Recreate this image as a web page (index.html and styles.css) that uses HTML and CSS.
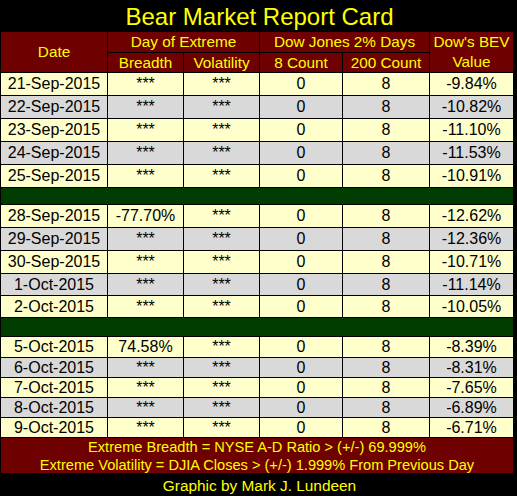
FILE: index.html
```html
<!DOCTYPE html>
<html>
<head>
<meta charset="utf-8">
<link rel="stylesheet" href="styles.css">
</head>
<body>
<div class="page">
  <div class="title">Bear Market Report Card</div>
  <div class="card">
    <div class="h span-r2">Date</div>
    <div class="h span-c2">Day of Extreme</div>
    <div class="h span-c2">Dow Jones 2% Days</div>
    <div class="h span-r2 two">Dow's BEV<br>Value</div>
    <div class="h">Breadth</div>
    <div class="h">Volatility</div>
    <div class="h">8 Count</div>
    <div class="h">200 Count</div>

    <div class="c y">21-Sep-2015</div><div class="c y">***</div><div class="c y">***</div><div class="c y">0</div><div class="c y">8</div><div class="c y">-9.84%</div>
    <div class="c g">22-Sep-2015</div><div class="c g">***</div><div class="c g">***</div><div class="c g">0</div><div class="c g">8</div><div class="c g">-10.82%</div>
    <div class="c y">23-Sep-2015</div><div class="c y">***</div><div class="c y">***</div><div class="c y">0</div><div class="c y">8</div><div class="c y">-11.10%</div>
    <div class="c g">24-Sep-2015</div><div class="c g">***</div><div class="c g">***</div><div class="c g">0</div><div class="c g">8</div><div class="c g">-11.53%</div>
    <div class="c y">25-Sep-2015</div><div class="c y">***</div><div class="c y">***</div><div class="c y">0</div><div class="c y">8</div><div class="c y">-10.91%</div>
    <div class="sep"></div>
    <div class="c y">28-Sep-2015</div><div class="c y">-77.70%</div><div class="c y">***</div><div class="c y">0</div><div class="c y">8</div><div class="c y">-12.62%</div>
    <div class="c g">29-Sep-2015</div><div class="c g">***</div><div class="c g">***</div><div class="c g">0</div><div class="c g">8</div><div class="c g">-12.36%</div>
    <div class="c y">30-Sep-2015</div><div class="c y">***</div><div class="c y">***</div><div class="c y">0</div><div class="c y">8</div><div class="c y">-10.71%</div>
    <div class="c g">1-Oct-2015</div><div class="c g">***</div><div class="c g">***</div><div class="c g">0</div><div class="c g">8</div><div class="c g">-11.14%</div>
    <div class="c y">2-Oct-2015</div><div class="c y">***</div><div class="c y">***</div><div class="c y">0</div><div class="c y">8</div><div class="c y">-10.05%</div>
    <div class="sep"></div>
    <div class="c y">5-Oct-2015</div><div class="c y">74.58%</div><div class="c y">***</div><div class="c y">0</div><div class="c y">8</div><div class="c y">-8.39%</div>
    <div class="c g">6-Oct-2015</div><div class="c g">***</div><div class="c g">***</div><div class="c g">0</div><div class="c g">8</div><div class="c g">-8.31%</div>
    <div class="c y">7-Oct-2015</div><div class="c y">***</div><div class="c y">***</div><div class="c y">0</div><div class="c y">8</div><div class="c y">-7.65%</div>
    <div class="c g">8-Oct-2015</div><div class="c g">***</div><div class="c g">***</div><div class="c g">0</div><div class="c g">8</div><div class="c g">-6.89%</div>
    <div class="c y">9-Oct-2015</div><div class="c y">***</div><div class="c y">***</div><div class="c y">0</div><div class="c y">8</div><div class="c y">-6.71%</div>
    <div class="foot">Extreme Breadth = NYSE A-D Ratio &gt; (+/-) 69.999%<br>Extreme Volatility = DJIA Closes &gt; (+/-) 1.999% From Previous Day</div>
  </div>
  <div class="credit">Graphic by Mark J. Lundeen</div>
</div>
</body>
</html>
```

FILE: styles.css
```css
html, body {
  margin: 0;
  padding: 0;
  background: #000;
}
.page {
  width: 517px;
  height: 496px;
  background: #000;
  font-family: "Liberation Sans", Arial, sans-serif;
  overflow: hidden;
}
.title {
  height: 28px;
  padding-top: 3px;
  color: #ffff00;
  font-size: 24px;
  line-height: 28px;
  text-align: center;
  padding-left: 2px;
  white-space: nowrap;
}
.card {
  width: 514px;
  display: grid;
  grid-template-columns: 106px 75px 75px 82px 86px 83px;
  grid-template-rows: 20px 19px 22px 22px 22px 22px 22px 16px 22px 22px 22px 21px 21px 18px 20px 19px 19px 19px 19px 35px;
  gap: 1px;
  padding: 1px 0 0 0;
  border-left: 1px solid #000;
  background: #000;
}
.h {
  background: #6e0000;
  color: #ffff00;
  font-size: 15.3px;
  line-height: 20px;
  display: flex;
  align-items: center;
  justify-content: center;
  text-align: center;
  white-space: nowrap;
}
.span-r2 { grid-row: span 2; }
.span-c2 { grid-column: span 2; }
.c {
  font-size: 16px;
  color: #000;
  display: flex;
  align-items: center;
  justify-content: center;
  white-space: nowrap;
}
.y { background: #ffffcc; }
.g { background: #d9d9d9; }
.sep {
  grid-column: 1 / -1;
  background: #003c00;
}
.foot {
  grid-column: 1 / -1;
  background: #6e0000;
  color: #ffff00;
  font-size: 14.6px;
  line-height: 18px;
  text-align: center;
  white-space: nowrap;
}
.credit {
  padding-top: 4px;
  color: #ffff00;
  font-size: 15.4px;
  line-height: 17px;
  text-align: center;
  padding-left: 2px;
}
```
